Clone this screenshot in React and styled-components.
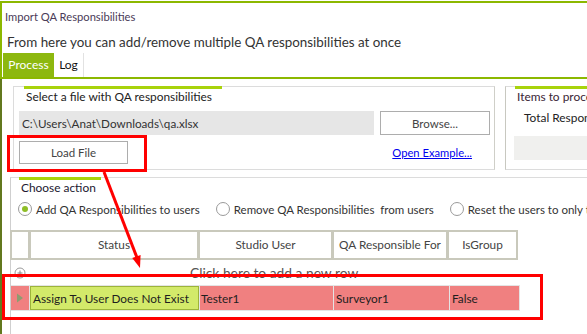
import React from "react";
import styled, { createGlobalStyle } from "styled-components";

const Global = createGlobalStyle`
  html, body { margin: 0; padding: 0; background: #fff; }
  body {
    width: 587px; height: 334px; overflow: hidden;
    font-family: Lato, "Open Sans", "DejaVu Sans", sans-serif;
    color: #222;
  }
  * { box-sizing: border-box; }
`;

const Window = styled.div`
  position: relative;
  width: 720px;
  height: 333px;
  margin-top: 1px;
  border-top: 2px solid #8cb800;
  background: #fff;
`;

const Header = styled.div`
  border-left: 2px solid #8cb800;
`;

const Title = styled.div`
  padding: 6px 0 0 3px;
  height: 22px;
  line-height: 16px;
  font-size: 11.2px;
  color: #4a3b58;
`;

const Subtitle = styled.div`
  margin-top: 8px;
  padding-left: 5px;
  line-height: 18px;
  height: 18px;
  font-size: 13.4px;
  color: #333;
`;

const TabStrip = styled.div`
  display: flex;
  margin-top: 2px;
  padding-left: 1px;
  border-bottom: 2px solid #8cb800;
`;

const Tab = styled.div`
  height: 24px;
  line-height: 24px;
  width: ${(p) => p.$w}px;
  text-align: center;
  font-size: 12px;
  background: ${(p) => (p.$active ? "#8db80f" : "#fff")};
  color: ${(p) => (p.$active ? "#fff" : "#111")};
  border-right: ${(p) => (p.$active ? "none" : "1px solid #e2e2e2")};
`;

const Panel = styled.div`
  border-left: 2px solid #62781e;
  height: 260px;
  padding: 7px 0 0 8px;
`;

const GroupRow = styled.div`
  display: grid;
  grid-template-columns: 482px 230px;
  column-gap: 10px;
  padding-left: 3px;
`;

const GroupBox = styled.div`
  height: 84px;
  border: 1px solid #dcdcdc;
  border-right-color: #cfcfc8;
  border-left-color: ${(p) => p.$leftColor || "#dcdcdc"};
  display: flex;
  flex-direction: column;
`;

const Legend = styled.div`
  margin: -1px 0 0 ${(p) => p.$offset}px;
  width: ${(p) => p.$w}px;
  border-top: 3px solid #a8d30c;
  padding-left: 2px;
  line-height: 16px;
  font-size: 11.9px;
  color: ${(p) => p.$color || "#222"};
  white-space: nowrap;
`;

const FieldRow = styled.div`
  display: flex;
  gap: 6px;
  margin-top: 6px;
  padding: 0 4px 0 5px;
  height: 24px;
`;

const PathField = styled.div`
  flex: 1;
  background: #e6e6e6;
  font-size: 11.7px;
  line-height: 24px;
  padding-left: 3px;
  color: #333;
`;

const Button = styled.div`
  width: ${(p) => p.$w}px;
  height: ${(p) => p.$h}px;
  border: 1px solid #adadad;
  background: #fff;
  display: flex;
  align-items: center;
  justify-content: center;
  font-size: 11.5px;
  color: #444;
`;

const LoadRow = styled.div`
  display: flex;
  align-items: center;
  justify-content: space-between;
  margin-top: 6px;
  padding: 0 22px 0 5px;
`;

const Link = styled.a`
  font-size: 11.2px;
  color: #0000ee;
  text-decoration: underline;
`;

const InfoLine = styled.div`
  margin: 5px 0 0 18px;
  font-size: 11.9px;
  line-height: 16px;
  color: #222;
  white-space: nowrap;
`;

const InfoBox = styled.div`
  margin: 10px 0 0 8px;
  height: 24px;
  background: #f0f0ee;
`;

const ActionGroup = styled.div`
  margin-top: 7px;
  border-top: 1px solid #dcdcdc;
  border-left: 1px solid #cfcfcf;
  height: 160px;
`;

const RadioRow = styled.div`
  display: flex;
  align-items: center;
  height: 18px;
  margin-top: 4px;
  padding-left: 7px;
`;

const RadioItem = styled.label`
  display: flex;
  align-items: center;
  margin-right: ${(p) => p.$mr}px;
  font-size: 11.5px;
  color: #333;
  white-space: pre;
`;

const RadioCircle = styled.span`
  width: 14px;
  height: 14px;
  border-radius: 50%;
  border: 1px solid #9a9a9a;
  background: #fff;
  display: flex;
  align-items: center;
  justify-content: center;
  margin-right: 4px;
  &::after {
    content: "";
    width: 6px;
    height: 6px;
    border-radius: 50%;
    background: ${(p) => (p.$on ? "#8ebd26" : "transparent")};
  }
`;

const HeaderRow = styled.div`
  display: grid;
  grid-template-columns: 16px 166px 131px 112px 67px;
  column-gap: 3px;
  width: 508px;
  margin: 12px 0 0 -1px;
  padding: 2px;
  background: #c9c9bc;
`;

const HeadCell = styled.div`
  background: #fff;
  height: 26px;
  line-height: 26px;
  text-align: center;
  font-size: 11.8px;
  color: #444;
  white-space: nowrap;
  overflow: hidden;
`;

const AddRow = styled.div`
  display: flex;
  align-items: center;
  height: 25px;
  padding-left: 3px;
`;

const AddText = styled.span`
  margin-left: 164px;
  font-size: 13.8px;
  color: #555;
`;

const DataRow = styled.div`
  display: grid;
  grid-template-columns: 18px 169px 133px 115px 69px;
  column-gap: 1px;
  width: 509px;
  height: 26px;
  padding: 1px 0;
  background: #e4e4e4;
`;

const DataCell = styled.div`
  background: ${(p) => (p.$status ? "#d3ea6a" : "#f08080")};
  border: ${(p) => (p.$status ? "1px solid #9cb43a" : "none")};
  display: flex;
  align-items: center;
  justify-content: ${(p) => (p.$center ? "center" : "flex-start")};
  padding-left: ${(p) => p.$pl || 0}px;
  font-size: 11.8px;
  color: #1e1e1e;
  white-space: nowrap;
`;

const Overlay = styled.div`
  position: absolute;
  left: ${(p) => p.$x}px;
  top: ${(p) => p.$y}px;
  width: ${(p) => p.$w}px;
  height: ${(p) => p.$h}px;
  border: 3px solid #ff0000;
  pointer-events: none;
`;

const ArrowSvg = styled.svg`
  position: absolute;
  left: 0;
  top: -3px;
  width: 587px;
  height: 334px;
  pointer-events: none;
`;

const PlusIcon = () => (
  <svg width="12" height="12" viewBox="0 0 12 12">
    <circle cx="6" cy="6" r="5" fill="none" stroke="#9a9a9a" strokeWidth="1" />
    <path d="M3.5 6h5M6 3.5v5" stroke="#8a8a8a" strokeWidth="1" />
  </svg>
);

const RowArrow = () => (
  <svg width="8" height="10" viewBox="0 0 8 10">
    <path d="M1 0.5L7 5L1 9.5Z" fill="#8e9c70" />
  </svg>
);

export default function App() {
  return (
    <>
      <Global />
      <Window>
        <Header>
          <Title>Import QA Responsibilities</Title>
          <Subtitle>From here you can add/remove multiple QA responsibilities at once</Subtitle>
          <TabStrip>
            <Tab $active $w={51}>Process</Tab>
            <Tab $w={30}>Log</Tab>
          </TabStrip>
        </Header>
        <Panel>
          <GroupRow>
            <GroupBox>
              <Legend $offset={10} $w={198}>Select a file with QA responsibilities</Legend>
              <FieldRow>
                <PathField>C:\Users\Anat\Downloads\qa.xlsx</PathField>
                <Button $w={110} $h={24}>Browse...</Button>
              </FieldRow>
              <LoadRow>
                <Button $w={109} $h={23}>Load File</Button>
                <Link>Open Example...</Link>
              </LoadRow>
            </GroupBox>
            <GroupBox $leftColor="#c8c8c0">
              <Legend $offset={9} $w={200} $color="#3a2535">Items to process</Legend>
              <InfoLine>Total Responsibilities:</InfoLine>
              <InfoBox />
            </GroupBox>
          </GroupRow>
          <ActionGroup>
            <Legend $offset={8} $w={82} $color="#1c1830">Choose action</Legend>
            <RadioRow>
              <RadioItem $mr={16}><RadioCircle $on />Add QA Responsibilities to users</RadioItem>
              <RadioItem $mr={16}><RadioCircle />Remove QA Responsibilities  from users</RadioItem>
              <RadioItem $mr={0}><RadioCircle />Reset the users to only these responsibilities</RadioItem>
            </RadioRow>
            <HeaderRow>
              <HeadCell />
              <HeadCell>Status</HeadCell>
              <HeadCell>Studio User</HeadCell>
              <HeadCell>QA Responsible For</HeadCell>
              <HeadCell>IsGroup</HeadCell>
            </HeaderRow>
            <AddRow>
              <PlusIcon />
              <AddText>Click here to add a new row</AddText>
            </AddRow>
            <DataRow>
              <DataCell $center><RowArrow /></DataCell>
              <DataCell $status $pl={2}>Assign To User Does Not Exist</DataCell>
              <DataCell $pl={1}>Tester1</DataCell>
              <DataCell $pl={2}>Surveyor1</DataCell>
              <DataCell $pl={2}>False</DataCell>
            </DataRow>
          </ActionGroup>
        </Panel>
        <Overlay $x={7} $y={132} $w={140} $h={37} />
        <Overlay $x={2} $y={271} $w={541} $h={46} />
        <ArrowSvg viewBox="0 0 587 334">
          <line x1="104" y1="172" x2="137.5" y2="259" stroke="#ff0000" strokeWidth="3" />
          <polygon points="140,268 140.6,255.1 132.2,258.1" fill="#ff0000" />
        </ArrowSvg>
      </Window>
    </>
  );
}
